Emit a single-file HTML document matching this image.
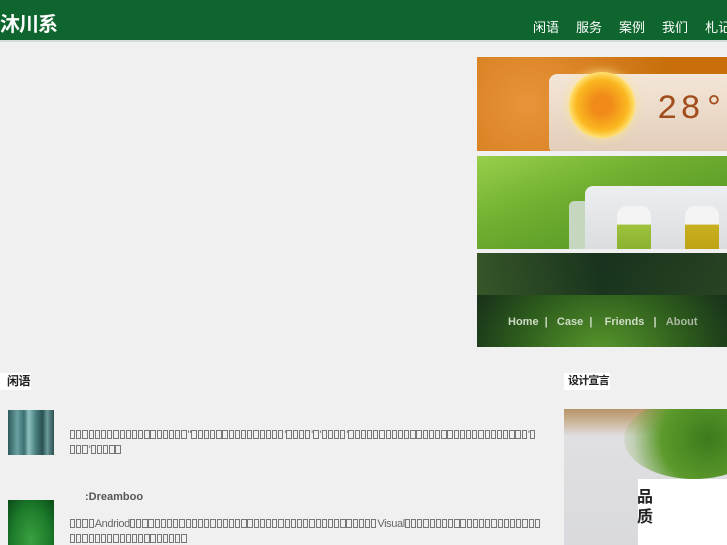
<!DOCTYPE html>
<html><head><meta charset="utf-8"><style>
*{margin:0;padding:0;box-sizing:border-box}
html,body{width:727px;height:545px;overflow:hidden}
body{background:#f0f0f0;font-family:"Liberation Sans","Noto Sans CJK SC",sans-serif;position:relative}
.hd{position:absolute;left:0;top:0;width:727px;height:42px;background:#0e652d;border-bottom:2px solid #d5dcd8}
.logo{position:absolute;left:0;top:8px;color:#fff;font-size:20px;font-weight:bold;letter-spacing:-1px}
.nav{position:absolute;top:17px;left:533px;white-space:nowrap;color:#fff;font-size:13px}
.nav span{margin-right:17px}
.ab{position:absolute;left:477px;width:250px}
.t{position:absolute;background:#fff;font-size:12px;font-weight:bold;color:#222;height:17px;line-height:17px;white-space:nowrap;overflow:hidden;letter-spacing:-0.5px}
.p{position:absolute;left:70px;width:480px;font-size:11px;color:#666;line-height:15px;white-space:nowrap}
.p i{display:inline-block;width:5.3px;height:9px;border:1px solid #777;margin-right:0.9px;vertical-align:-1px}
.p em{font-style:normal;letter-spacing:-0.4px}
</style></head><body>
<div class="hd"><div class="logo">沐川系</div>
<div class="nav"><span>闲语</span><span>服务</span><span>案例</span><span>我们</span><span>札记</span></div></div>

<div class="ab" style="top:57px;height:94px;background:radial-gradient(circle at 20% 50%,#e9943a,#c86f0c 70%);overflow:hidden">
 <div style="position:absolute;left:72px;top:17px;width:200px;height:80px;border-radius:8px;background:linear-gradient(#f4e6d8,#e2cdb8)"></div>
 <div style="position:absolute;left:92px;top:15px;width:66px;height:66px;border-radius:50%;background:radial-gradient(circle,#f08a18 20%,#fbb820 55%,#ffe070 70%,#f6c850 80%);box-shadow:0 0 10px #ffe58a"></div>
 <div style="position:absolute;left:180px;top:34px;font-size:34px;color:#a24d1c;font-family:'Liberation Mono',monospace;letter-spacing:3px">28°</div>
</div>
<div class="ab" style="top:156px;height:93px;background:linear-gradient(160deg,#98cf4a,#6fae30 40%,#4f8d20);overflow:hidden">
 <div style="position:absolute;left:92px;top:45px;width:20px;height:60px;background:#c6d7c0;border-radius:5px"></div>
 <div style="position:absolute;left:108px;top:30px;width:160px;height:80px;border-radius:8px;background:linear-gradient(#eceef0,#d6d9dc)"></div>
 <div style="position:absolute;left:140px;top:50px;width:34px;height:60px;background:linear-gradient(#f4f4f4 30%,#9fc23c 32%,#7aa52a);border-radius:10px 10px 0 0"></div>
 <div style="position:absolute;left:208px;top:50px;width:34px;height:60px;background:linear-gradient(#f4f4f4 30%,#c8b020 32%,#b89a10);border-radius:10px 10px 0 0"></div>
</div>
<div class="ab" style="top:253px;height:94px;background:radial-gradient(ellipse at 50% 110%,#5a9a2c,#2c5a1c 50%,#13261a 90%)">
 <div style="position:absolute;left:0;top:0;width:250px;height:42px;background:linear-gradient(90deg,#3a5a2a,#17301e 50%,#2a4424);opacity:.9"></div>
 <div style="position:absolute;left:31px;top:63px;font-size:11px;font-weight:bold;color:#cfdcc6;white-space:nowrap">Home &nbsp;| &nbsp;&nbsp;Case &nbsp;| &nbsp;&nbsp;&nbsp;Friends &nbsp;&nbsp;| &nbsp;&nbsp;<span style="color:#a9b9a0">About</span></div>
</div>

<div class="t" style="left:0;top:373px;width:31px;padding-left:7px">闲语</div>
<div class="t" style="left:564px;top:373px;width:46px;padding-left:4px;font-size:11px;letter-spacing:-0.8px">设计宣言</div>

<div style="position:absolute;left:8px;top:410px;width:46px;height:45px;background:linear-gradient(90deg,#2d5a5c,#6aa0a0 20%,#3b7070 35%,#8fc0c0 45%,#4a8080 60%,#2a5050 75%,#6a9a9a 85%,#2d5050)"></div>
<div style="position:absolute;left:8px;top:500px;width:46px;height:45px;background:radial-gradient(ellipse at 50% 90%,#3aa040,#1c7a2a 60%,#0a4a18)"></div>

<div class="p" style="top:428px"><i></i><i></i><i></i><i></i><i></i><i></i><i></i><i></i><i></i><i></i><i></i><i></i><i></i><i></i><i></i><i></i><i></i><i></i><i></i>"<i></i><i></i><i></i><i></i><i></i><i></i><i></i><i></i><i></i><i></i><i></i><i></i><i></i><i></i><i></i>'<i></i><i></i><i></i><i></i>'<i></i>'<i></i><i></i><i></i><i></i>'<i></i><i></i><i></i><i></i><i></i><i></i><i></i><i></i><i></i><i></i><i></i><i></i><i></i><i></i><i></i><i></i><i></i><i></i><i></i><i></i><i></i><i></i><i></i><i></i><i></i><i></i><i></i><i></i><i></i>'<i></i><br><i></i><i></i><i></i>'<i></i><i></i><i></i><i></i><i></i></div>

<div style="position:absolute;left:85px;top:491px;font-size:11px;font-weight:bold;color:#555">:Dreamboo</div>
<div class="p" style="top:517px"><i></i><i></i><i></i><i></i><em>Andriod</em><i></i><i></i><i></i><i></i><i></i><i></i><i></i><i></i><i></i><i></i><i></i><i></i><i></i><i></i><i></i><i></i><i></i><i></i><i></i><i></i><i></i><i></i><i></i><i></i><i></i><i></i><i></i><i></i><i></i><i></i><i></i><i></i><i></i><i></i><i></i><i></i><i></i><i></i><i></i><i></i><em>Visual</em><i></i><i></i><i></i><i></i><i></i><i></i><i></i><i></i><i></i><i></i><i></i><i></i><i></i><i></i><i></i><i></i><i></i><i></i><i></i><i></i><i></i><i></i><br><i></i><i></i><i></i><i></i><i></i><i></i><i></i><i></i><i></i><i></i><i></i><i></i><i></i><i></i><i></i><i></i><i></i><i></i><i></i></div>

<div style="position:absolute;left:564px;top:409px;width:163px;height:136px;background:linear-gradient(#b8946a,#c8b090 8%,#e0dfe2 20%,#d9dadd);overflow:hidden">
 <div style="position:absolute;left:60px;top:-10px;width:140px;height:80px;border-radius:50%;background:radial-gradient(circle at 60% 50%,#3c7a1c,#5c9a2c 50%,rgba(120,170,70,.3) 80%,transparent)"></div>
 <div style="position:absolute;left:74px;top:70px;width:89px;height:70px;background:#fff"></div>
 <div style="position:absolute;left:73px;top:79px;font-size:16px;line-height:20px;color:#222;font-weight:bold">品<br>质</div>
</div>
</body></html>
